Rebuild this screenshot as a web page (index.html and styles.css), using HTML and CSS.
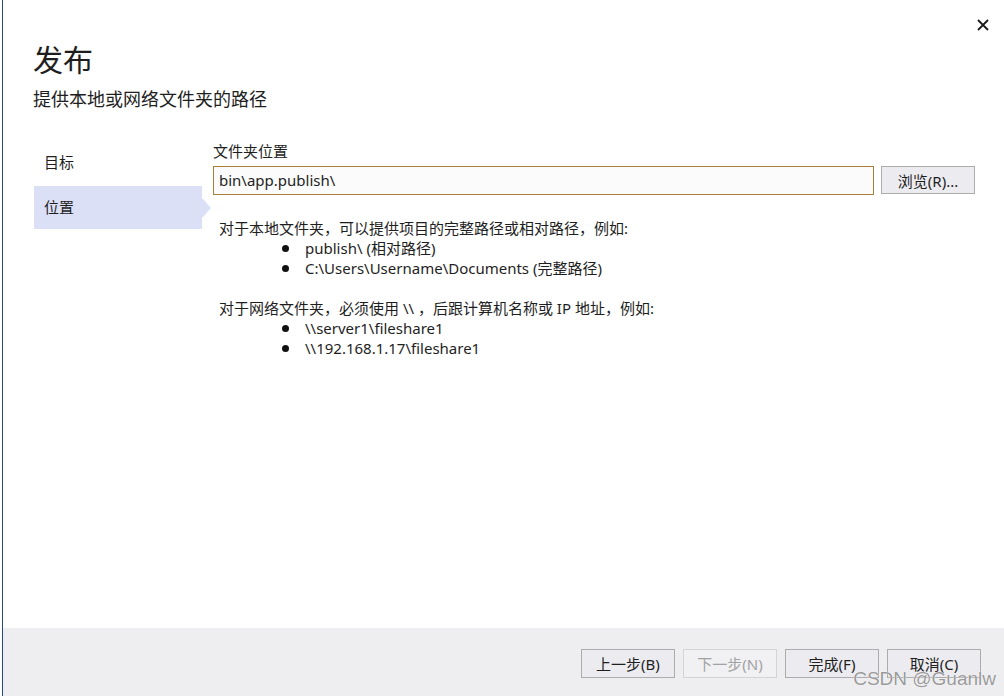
FILE: index.html
```html
<!DOCTYPE html>
<html lang="zh-CN">
<head>
    <meta charset="UTF-8">
    <title>发布</title>
    <link rel="stylesheet" href="styles.css">
</head>
<body>
    <div class="window">
        <button class="close-btn" title="关闭">
            <svg width="12" height="12" viewBox="0 0 12 12"><path d="M1 1L11 11M11 1L1 11" stroke="#1a1a1a" stroke-width="1.8"/></svg>
        </button>
        <div class="header">
            <h1>发布</h1>
            <div class="subtitle">提供本地或网络文件夹的路径</div>
        </div>
        <div class="main">
            <div class="nav">
                <div class="nav-item">目标</div>
                <div class="nav-item active">位置</div>
            </div>
            <div class="content">
                <label class="field-label">文件夹位置</label>
                <div class="field-row">
                    <div class="path-input">bin\app.publish\</div>
                    <button class="btn browse">浏览(R)...</button>
                </div>
                <div class="info">
                    <p>对于本地文件夹，可以提供项目的完整路径或相对路径，例如:</p>
                    <ul>
                        <li>publish\ (相对路径)</li>
                        <li>C:\Users\Username\Documents (完整路径)</li>
                    </ul>
                    <p class="gap">对于网络文件夹，必须使用 \\ ，后跟计算机名称或 IP 地址，例如:</p>
                    <ul>
                        <li>\\server1\fileshare1</li>
                        <li>\\192.168.1.17\fileshare1</li>
                    </ul>
                </div>
            </div>
        </div>
        <div class="footer">
            <button class="btn">上一步(B)</button>
            <button class="btn" disabled>下一步(N)</button>
            <button class="btn">完成(F)</button>
            <button class="btn">取消(C)</button>
        </div>
        <div class="watermark">CSDN @Guanlw</div>
    </div>
</body>
</html>
```

FILE: styles.css
```css
html, body {
    margin: 0;
    padding: 0;
    background-color: white;
}
body {
    font-family: "Noto Sans", "Noto Sans CJK SC", sans-serif;
    color: #1e1e1e;
    width: 1004px;
    height: 696px;
    overflow: hidden;
}
.window {
    position: relative;
    margin-left: 2px;
    border-left: 1px solid #2a4684;
    height: 696px;
    display: flex;
    flex-direction: column;
    box-sizing: border-box;
}
.close-btn {
    position: absolute;
    top: 19px;
    right: 15px;
    padding: 0;
    border: none;
    background: none;
    width: 12px;
    height: 12px;
}
.close-btn svg {
    display: block;
}
.header {
    padding: 40px 0 0 30px;
}
h1 {
    margin: 0;
    font-size: 30px;
    font-weight: normal;
    line-height: 40px;
}
.subtitle {
    margin-top: 7px;
    font-size: 18px;
    line-height: 24px;
}
.main {
    display: flex;
    padding-top: 19px;
}
.nav {
    width: 168px;
    margin-left: 31px;
    padding-top: 11px;
}
.nav-item {
    position: relative;
    height: 43px;
    line-height: 43px;
    padding-left: 10px;
    margin-bottom: 2px;
    font-size: 15px;
}
.nav-item.active {
    background-color: #dbe0f6;
}
.nav-item.active::after {
    content: "";
    position: absolute;
    right: -9px;
    top: 12px;
    border-top: 10px solid transparent;
    border-bottom: 10px solid transparent;
    border-left: 9px solid #dbe0f6;
}
.content {
    margin-left: 11px;
    flex: 1;
    padding-right: 29px;
}
.field-label {
    display: block;
    font-size: 15px;
    line-height: 20px;
    margin-top: 11px;
}
.field-row {
    display: flex;
    gap: 7px;
    margin-top: 5px;
}
.path-input {
    flex: 1;
    height: 29px;
    box-sizing: border-box;
    border: 1px solid #a8803a;
    background-color: #fbfbfb;
    padding-left: 5px;
    font-size: 15px;
    line-height: 27px;
}
.btn {
    width: 94px;
    height: 29px;
    box-sizing: border-box;
    border: 1px solid #acacac;
    background-color: #ececf0;
    font-family: inherit;
    font-size: 15px;
    color: #1e1e1e;
    padding: 0;
}
.btn.browse {
    height: 28px;
}
.btn:disabled {
    color: #a2a2a2;
    border-color: #d4d4d8;
    background-color: #f1f1f3;
}
.info {
    margin-top: 23px;
    padding-left: 6px;
    font-size: 15px;
    line-height: 20px;
}
.info p {
    margin: 0;
}
.info p.gap {
    margin-top: 20px;
}
.info ul {
    margin: 0;
    padding-left: 86px;
    list-style: none;
}
.info li {
    position: relative;
}
.info li::before {
    content: "";
    position: absolute;
    left: -23px;
    top: 7px;
    width: 7px;
    height: 7px;
    border-radius: 50%;
    background-color: #111;
}
.footer {
    margin-top: auto;
    height: 68px;
    background-color: #eeeef1;
    display: flex;
    justify-content: flex-end;
    align-items: flex-start;
    gap: 8px;
    padding: 21px 23px 0 0;
    box-sizing: border-box;
}
.watermark {
    position: absolute;
    right: 8px;
    bottom: 6px;
    font-family: "Liberation Sans", sans-serif;
    font-size: 19px;
    line-height: 22px;
    color: #9a9a9a;
    text-shadow: 0 0 1px #fff, 0 0 1px #fff;
}
```
